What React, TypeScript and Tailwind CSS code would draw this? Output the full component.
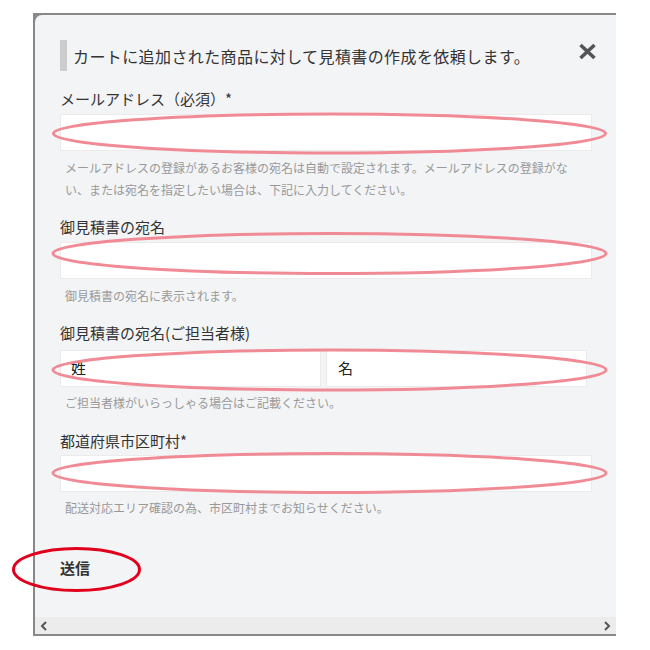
import React from "react";

const jp = { fontFamily: '"Noto Sans CJK JP", "Noto Sans", sans-serif' };

function Field({ h = "h-[37px]" }: { h?: string }) {
  return <div className={`${h} w-[532px] bg-white border border-[#ebebeb]`} />;
}

export default function App() {
  return (
    <div className="relative w-[650px] h-[650px] bg-white overflow-hidden" style={jp}>
      <div className="ml-[33px] mt-[13px] w-[583px] h-[623px] bg-[#888888] pl-[2px] pt-[2px] pb-[2px]">
        <div className="h-full rounded-tl-[7px] bg-[#f3f4f6] flex flex-col">
          <div className="flex-1 pl-[25px] pt-[25px]">
            {/* title */}
            <div className="flex items-center h-[31px] relative">
              <div className="w-[7px] h-[31px] bg-[#cccccc]" />
              <div className="ml-[6px] text-[16px] leading-[20px] tracking-[0.4px] text-[#333]">
                カートに追加された商品に対して見積書の作成を依頼します。
              </div>
              <div className="absolute left-[518px] top-[3px]">
                <svg width="19" height="17" viewBox="0 0 19 17">
                  <path d="M2.5 2 L16.5 15 M16.5 2 L2.5 15" stroke="#555" strokeWidth="3.6" strokeLinecap="butt" />
                </svg>
              </div>
            </div>

            {/* email */}
            <div className="mt-[18px] text-[15px] leading-[20px] text-[#333]">メールアドレス（必須）*</div>
            <div className="mt-[5px]"><Field /></div>
            <div className="mt-[6px] pl-[5px] text-[12px] leading-[22px] text-[#999]">
              メールアドレスの登録があるお客様の宛名は自動で設定されます。メールアドレスの登録がな
              <br />
              い、または宛名を指定したい場合は、下記に入力してください。
            </div>

            {/* name */}
            <div className="mt-[16px] text-[15px] leading-[20px] text-[#333]">御見積書の宛名</div>
            <div className="mt-[5px]"><Field /></div>
            <div className="mt-[6px] pl-[5px] text-[12px] leading-[22px] text-[#999]">御見積書の宛名に表示されます。</div>

            {/* contact */}
            <div className="mt-[16px] text-[15px] leading-[20px] text-[#333]">御見積書の宛名(ご担当者様)</div>
            <div className="mt-[7px] flex gap-[5px]">
              <div className="h-[37px] w-[261px] bg-white border border-[#ebebeb] flex items-center pl-[10px] text-[15px] text-[#222]">姓</div>
              <div className="h-[37px] w-[261px] bg-white border border-[#ebebeb] flex items-center pl-[11px] text-[15px] text-[#222]">名</div>
            </div>
            <div className="mt-[5px] pl-[5px] text-[12px] leading-[22px] text-[#999]">ご担当者様がいらっしゃる場合はご記載ください。</div>

            {/* city */}
            <div className="mt-[17px] text-[15px] leading-[20px] text-[#333]">都道府県市区町村*</div>
            <div className="mt-[4px]"><Field /></div>
            <div className="mt-[5px] pl-[5px] text-[12px] leading-[22px] text-[#999]">配送対応エリア確認の為、市区町村までお知らせください。</div>

            <div className="mt-[39px] text-[15px] leading-[20px] font-bold text-[#333]">送信</div>
          </div>

          {/* horizontal scrollbar */}
          <div className="h-[17px] bg-[#ececec] flex items-center justify-between px-[5px]">
            <svg width="8" height="10" viewBox="0 0 8 10">
              <path d="M6 1 L2 5 L6 9" stroke="#555" strokeWidth="2" fill="none" />
            </svg>
            <svg width="8" height="10" viewBox="0 0 8 10">
              <path d="M2 1 L6 5 L2 9" stroke="#555" strokeWidth="2" fill="none" />
            </svg>
          </div>
        </div>
      </div>

      {/* annotation overlay */}
      <svg className="absolute left-0 top-0 pointer-events-none" width="650" height="650" viewBox="0 0 650 650">
        <g fill="none" stroke="#f08b96" strokeWidth="3">
          <ellipse cx="329.5" cy="133.5" rx="276" ry="19.5" />
          <ellipse cx="329.5" cy="253.5" rx="276.5" ry="20" />
          <ellipse cx="329.5" cy="370" rx="276.5" ry="20" />
          <ellipse cx="329.5" cy="473" rx="276.5" ry="19.5" />
        </g>
        <ellipse cx="76.5" cy="569.5" rx="63" ry="21" fill="none" stroke="#e0001b" strokeWidth="3" />
      </svg>
    </div>
  );
}
